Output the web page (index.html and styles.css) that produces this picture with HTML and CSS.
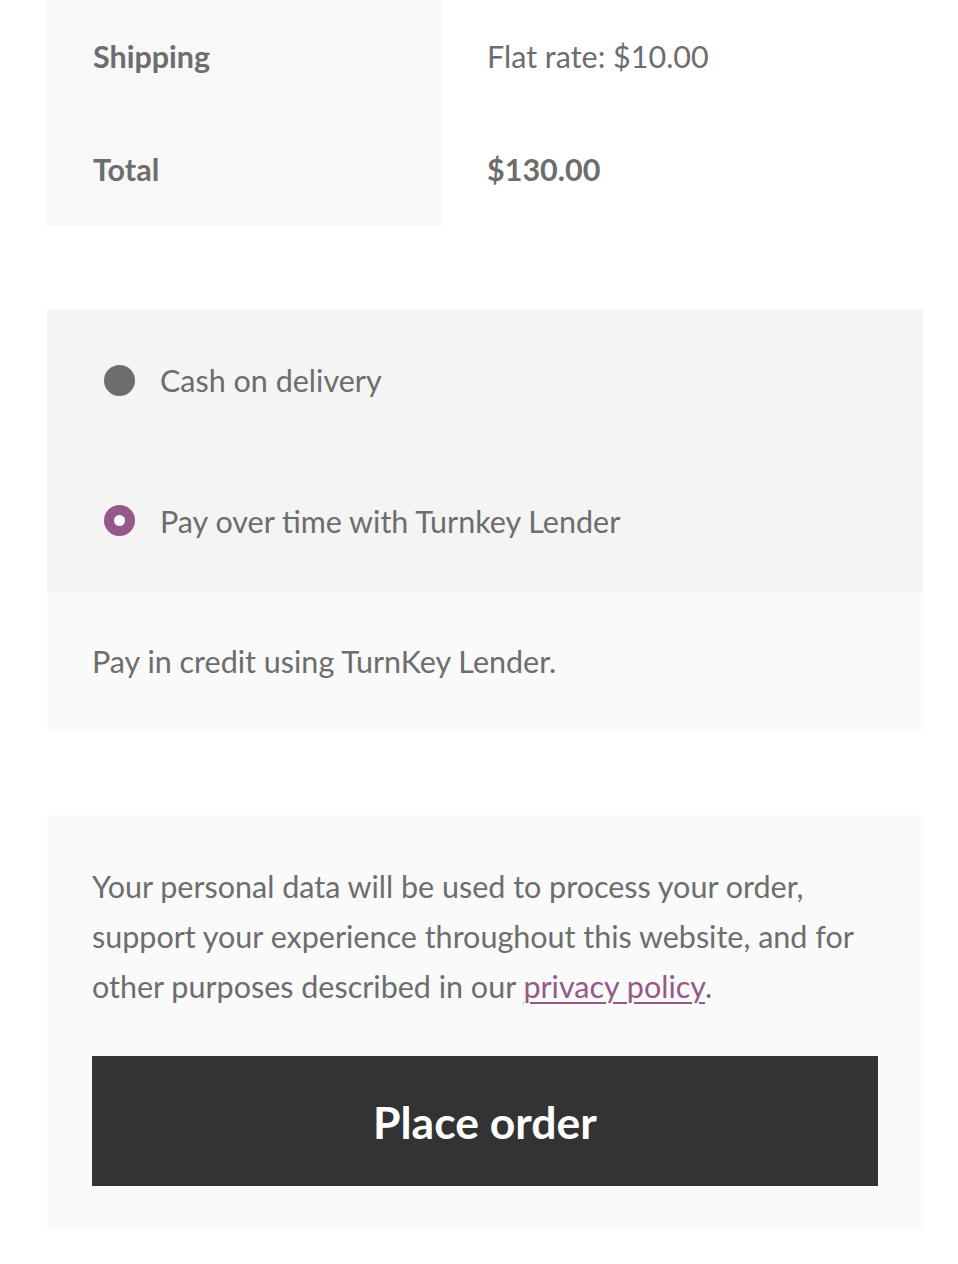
FILE: index.html
```html
<!DOCTYPE html>
<html lang="en">
<head>
<meta charset="utf-8">
<title>Checkout</title>
<link rel="stylesheet" href="styles.css">
</head>
<body>
<div class="checkout">
  <table class="totals">
    <tbody>
      <tr>
        <th>Shipping</th>
        <td>Flat rate: $10.00</td>
      </tr>
      <tr>
        <th>Total</th>
        <td class="strong">$130.00</td>
      </tr>
    </tbody>
  </table>

  <div class="payment">
    <ul class="methods">
      <li class="method">
        <span class="radio"></span>
        <span class="label">Cash on delivery</span>
      </li>
      <li class="method">
        <span class="radio checked"></span>
        <span class="label">Pay over time with Turnkey Lender</span>
      </li>
    </ul>
    <div class="method-desc">Pay in credit using TurnKey Lender.</div>
  </div>

  <div class="place-order">
    <p class="privacy">Your personal data will be used to process your order, support your experience throughout this website, and for other purposes described in our <a href="#" class="link">privacy policy</a>.</p>
    <button class="order-btn" type="button">Place order</button>
  </div>
</div>
</body>
</html>
```

FILE: styles.css
```css
* { box-sizing: border-box; }

html, body {
  margin: 0;
  padding: 0;
  background: #ffffff;
}

body {
  font-family: "Lato", "Open Sans", sans-serif;
  font-size: 30.5px;
  line-height: 50px;
  color: #6d6d6d;
}

.checkout {
  width: 876px;
  margin-left: 47px;
  padding-bottom: 34px;
}

.totals {
  width: 100%;
  border-collapse: collapse;
  border-spacing: 0;
}

.totals th,
.totals td {
  padding: 31px 46px 32px;
  height: 113px;
  text-align: left;
  vertical-align: middle;
  line-height: 50px;
}

.totals th {
  width: 394px;
  background: #f8f8f8;
  font-weight: 700;
}

.totals td {
  font-weight: 400;
  background: #ffffff;
}

.totals td.strong {
  font-weight: 700;
}

.payment {
  margin-top: 84px;
}

.methods {
  list-style: none;
  margin: 0;
  padding: 0;
  background: #f4f4f4;
}

.method {
  display: flex;
  align-items: center;
  gap: 25px;
  padding: 45px 46px 45px 57px;
  height: 140.5px;
}

.radio {
  width: 31px;
  height: 31px;
  border-radius: 50%;
  background: #6d6d6d;
  flex: none;
}

.radio.checked {
  background: #ffffff;
  border: 10.5px solid #96588a;
}

.method-desc {
  background: #fafafa;
  padding: 45px 45px;
  height: 140px;
}

.place-order {
  margin-top: 84px;
  background: #fafafa;
  padding: 46px 45px 44px;
}

.privacy {
  margin: 0 0 45px;
}

.link {
  color: #96588a;
  text-decoration: underline;
  text-underline-offset: 4px;
  text-decoration-thickness: 2px;
}

.order-btn {
  display: block;
  width: 100%;
  height: 130px;
  border: 0;
  border-radius: 0;
  background: #333333;
  color: #ffffff;
  font-family: inherit;
  font-size: 44.5px;
  font-weight: 700;
  cursor: pointer;
}
```
